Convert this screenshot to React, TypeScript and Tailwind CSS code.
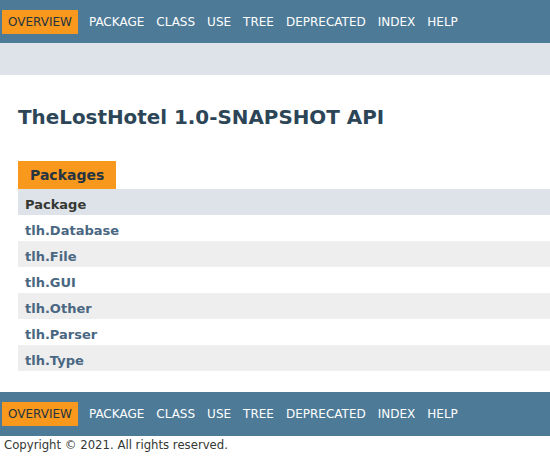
import React from "react";

const navItems = ["PACKAGE", "CLASS", "USE", "TREE", "DEPRECATED", "INDEX", "HELP"];
const packages = ["tlh.Database", "tlh.File", "tlh.GUI", "tlh.Other", "tlh.Parser", "tlh.Type"];

function NavBar({ h }: { h: string }) {
  return (
    <div className={`${h} bg-[#4D7A97] flex items-center pl-[2px] text-[12px] leading-[14px]`}>
      <div className="h-[24px] flex items-center bg-[#F8981D] text-[#253441] pl-[6px] pr-[6px] mr-[5px]">OVERVIEW</div>
      {navItems.map((n) => (
        <div key={n} className="h-[24px] flex items-center px-[6px] text-white">
          {n}
        </div>
      ))}
    </div>
  );
}

export default function App() {
  return (
    <div className="w-[550px] h-[457px] overflow-hidden bg-white text-[#353833] font-['DejaVu_Sans',Arial,Helvetica,sans-serif]">
      <NavBar h="h-[43px]" />
      <div className="h-[32px] bg-[#dee3e9]" />
      <h1 className="mt-[31px] pl-[18px] text-[19.9px] leading-[23px] font-bold text-[#2c4557]">
        TheLostHotel 1.0-SNAPSHOT API
      </h1>
      <div className="mt-[32px] ml-[18px]">
        <div className="w-[98px] h-[28px] bg-[#F8981D] text-[#253441] text-[14px] leading-[16px] font-bold pl-[12px] flex items-center">
          Packages
        </div>
        <div className="h-[26px] bg-[#dee3e9] pl-[7px] pt-[8px] text-[13px] leading-[15px] font-bold text-[#353833]">
          Package
        </div>
        {packages.map((p, i) => (
          <div
            key={p}
            className={`h-[26px] pl-[7px] pt-[8px] text-[13px] leading-[15px] font-bold text-[#4A6782] ${
              i % 2 === 0 ? "bg-white" : "bg-[#EEEEEF]"
            }`}
          >
            {p}
          </div>
        ))}
      </div>
      <div className="mt-[21px]">
        <NavBar h="h-[44px]" />
      </div>
      <div className="mt-[2px] pl-[4px] text-[11.7px] leading-[14px] text-[#353833]">
        Copyright © 2021. All rights reserved.
      </div>
    </div>
  );
}
